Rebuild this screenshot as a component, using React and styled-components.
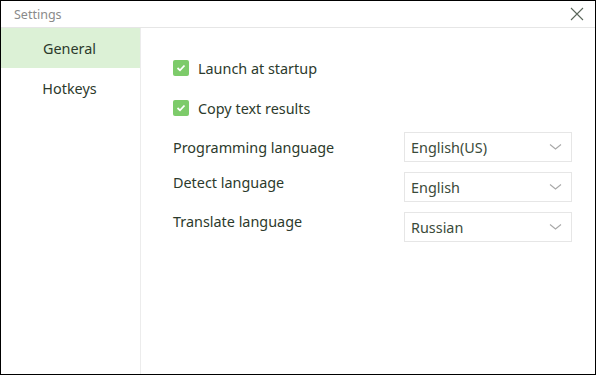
import React from 'react'
import styled, { createGlobalStyle } from 'styled-components'

const Global = createGlobalStyle`
  html, body { margin: 0; padding: 0; background: #fff; }
  * { box-sizing: border-box; }
  body { font-family: "Noto Sans", "Open Sans", sans-serif; }
`

const Window = styled.div`
  width: 596px;
  height: 375px;
  border: 1px solid #000;
  display: flex;
  flex-direction: column;
  background: #fff;
`

const TitleBar = styled.div`
  height: 27px;
  border-bottom: 1px solid #e6e6e6;
  display: flex;
  align-items: center;
  justify-content: space-between;
  padding: 0 11px 0 13px;
  flex-shrink: 0;
`

const Title = styled.span`
  font-size: 12.5px;
  color: #8a8a8a;
`

const Close = styled.svg`
  width: 14px;
  height: 14px;
  margin-top: -1px;
`

const Body = styled.div`
  flex: 1;
  display: flex;
`

const Sidebar = styled.div`
  width: 140px;
  border-right: 1px solid #ececec;
  display: flex;
  flex-direction: column;
`

const NavItem = styled.div`
  height: 40px;
  display: flex;
  align-items: center;
  justify-content: center;
  font-size: 14.4px;
  color: #2c3a2c;
  background: ${p => (p.active ? '#dcf1d6' : 'transparent')};
  padding-right: 2px;
`

const Content = styled.div`
  flex: 1;
  padding: 20px 23px 0 32px;
  display: flex;
  flex-direction: column;
`

const CheckRow = styled.label`
  height: 40px;
  display: flex;
  align-items: center;
  gap: 9px;
  font-size: 14.4px;
  color: #2c3a2c;
`

const Box = styled.span`
  width: 16px;
  height: 16px;
  border-radius: 2px;
  background: #7dcb6a;
  display: flex;
  align-items: center;
  justify-content: center;
`

const SelectRow = styled.div`
  display: flex;
  justify-content: space-between;
  align-items: flex-start;
  margin-top: ${p => p.gap}px;
`

const Label = styled.span`
  font-size: 14.4px;
  color: #2c3a2c;
  line-height: 20px;
  padding-top: ${p => p.offset}px;
`

const Select = styled.div`
  width: 168px;
  height: 30px;
  border: 1px solid #e6e6e6;
  display: flex;
  align-items: center;
  justify-content: space-between;
  padding: 0 9px 0 6px;
  font-size: 14.4px;
  color: #3a4a3a;
`

const Chevron = () => (
  <svg width="13" height="8" viewBox="0 0 13 8">
    <path d="M1 1.5 L6.5 6 L12 1.5" fill="none" stroke="#a8a8a8" strokeWidth="1.1" />
  </svg>
)

const Check = () => (
  <svg width="10" height="8" viewBox="0 0 10 8">
    <path d="M1.5 4 L4 6.3 L8.5 1.5" fill="none" stroke="#fff" strokeWidth="1.8" />
  </svg>
)

const selects = [
  { label: 'Programming language', value: 'English(US)', gap: 4, offset: 6 },
  { label: 'Detect language', value: 'English', gap: 10, offset: 1 },
  { label: 'Translate language', value: 'Russian', gap: 10, offset: 0 },
]

export default function App() {
  return (
    <>
      <Global />
      <Window>
        <TitleBar>
          <Title>Settings</Title>
          <Close viewBox="0 0 14 14">
            <path d="M1 1 L13 13 M13 1 L1 13" stroke="#5a665a" strokeWidth="1.1" />
          </Close>
        </TitleBar>
        <Body>
          <Sidebar>
            <NavItem active>General</NavItem>
            <NavItem>Hotkeys</NavItem>
          </Sidebar>
          <Content>
            <CheckRow>
              <Box><Check /></Box>
              Launch at startup
            </CheckRow>
            <CheckRow>
              <Box><Check /></Box>
              Copy text results
            </CheckRow>
            {selects.map(s => (
              <SelectRow key={s.label} gap={s.gap}>
                <Label offset={s.offset}>{s.label}</Label>
                <Select>
                  {s.value}
                  <Chevron />
                </Select>
              </SelectRow>
            ))}
          </Content>
        </Body>
      </Window>
    </>
  )
}
